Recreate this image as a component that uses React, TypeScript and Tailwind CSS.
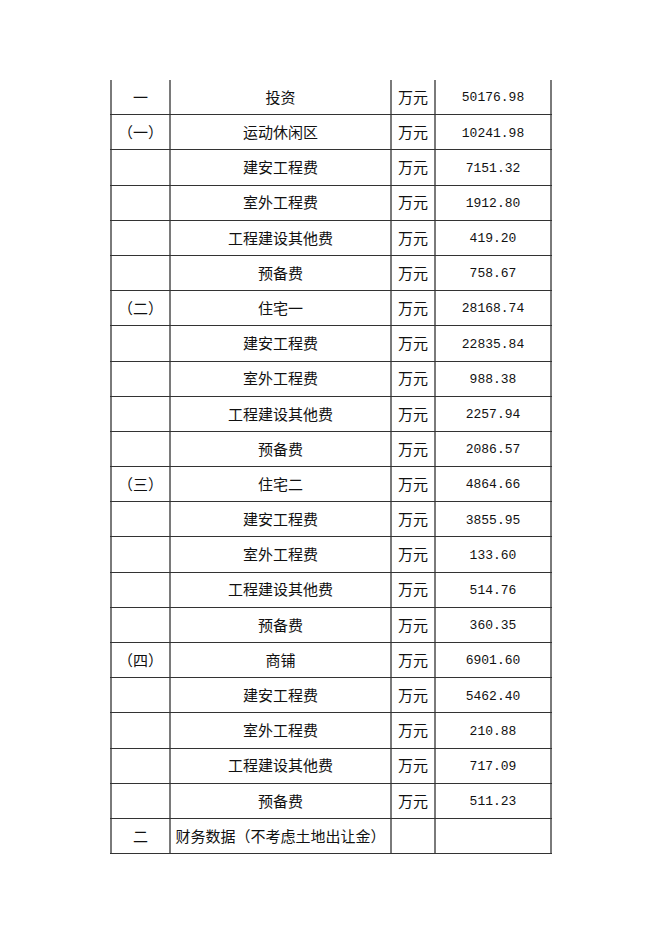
const rows: [string, string, string, string][] = [
  ['一', '投资', '万元', '50176.98'],
  ['（一）', '运动休闲区', '万元', '10241.98'],
  ['', '建安工程费', '万元', '7151.32'],
  ['', '室外工程费', '万元', '1912.80'],
  ['', '工程建设其他费', '万元', '419.20'],
  ['', '预备费', '万元', '758.67'],
  ['（二）', '住宅一', '万元', '28168.74'],
  ['', '建安工程费', '万元', '22835.84'],
  ['', '室外工程费', '万元', '988.38'],
  ['', '工程建设其他费', '万元', '2257.94'],
  ['', '预备费', '万元', '2086.57'],
  ['（三）', '住宅二', '万元', '4864.66'],
  ['', '建安工程费', '万元', '3855.95'],
  ['', '室外工程费', '万元', '133.60'],
  ['', '工程建设其他费', '万元', '514.76'],
  ['', '预备费', '万元', '360.35'],
  ['（四）', '商铺', '万元', '6901.60'],
  ['', '建安工程费', '万元', '5462.40'],
  ['', '室外工程费', '万元', '210.88'],
  ['', '工程建设其他费', '万元', '717.09'],
  ['', '预备费', '万元', '511.23'],
  ['二', '财务数据（不考虑土地出让金）', '', ''],
]

const cjk = "font-['SimSun','Noto_Sans_CJK_SC',sans-serif]"

export default function App() {
  return (
    <div className="min-h-[936px] w-[662px] bg-white pl-[110px] pt-[80px]">
      <div className="w-[442px] text-[15px] text-[#111]">
        {rows.map(([no, name, unit, value], i) => (
          <div key={i} className="flex h-[35.2px] border-b border-[#333]">
            <div className={`${cjk} flex w-[59px] items-center justify-center border-l-2 border-[#7a7a7a]`}>
              {no}
            </div>
            <div className={`${cjk} flex w-[221px] items-center justify-center whitespace-nowrap border-l-2 border-[#7a7a7a]`}>
              {name}
            </div>
            <div className={`${cjk} flex w-[44px] items-center justify-center border-l-2 border-[#7a7a7a]`}>
              {unit}
            </div>
            <div className="flex w-[118px] items-center justify-center border-x-2 border-[#7a7a7a] pt-[2px] font-['Liberation_Mono',monospace] text-[13px]">
              {value}
            </div>
          </div>
        ))}
      </div>
    </div>
  )
}
